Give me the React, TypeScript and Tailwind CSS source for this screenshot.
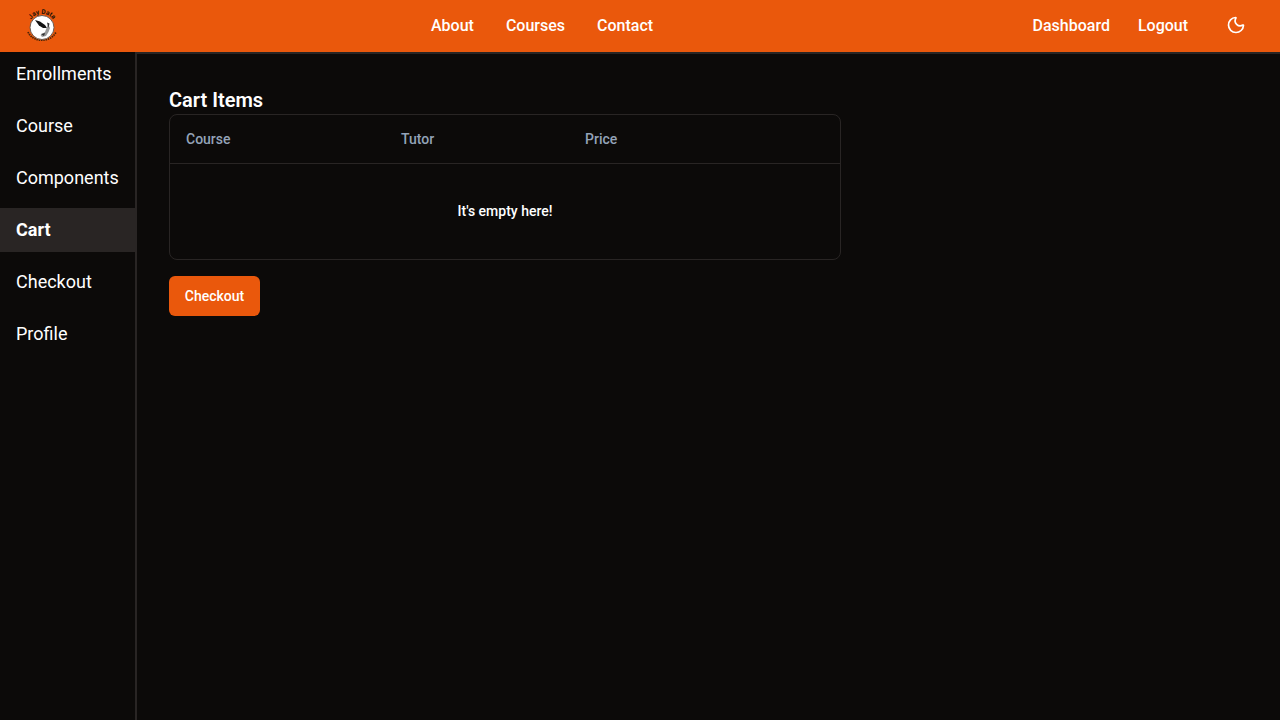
import { Moon } from 'lucide-react';

const sideLinks = ['Enrollments', 'Course', 'Components', 'Cart', 'Checkout', 'Profile'];

function Logo() {
  return (
    <svg width="34" height="34" viewBox="0 0 34 34" aria-hidden="true">
      <defs>
        <path id="logo-arc" d="M5.5 12 C9 2.5 25 2.5 28.5 12" />
      </defs>
      <text fontFamily="Roboto, sans-serif" fontSize="6.5" fontWeight="700" fill="#1c1208">
        <textPath href="#logo-arc" startOffset="50%" textAnchor="middle">
          Jay Data
        </textPath>
      </text>
      <path d="M3 23 C8 34 26 34 31 23" fill="none" stroke="#4a2408" strokeWidth="1.7" strokeDasharray="1.5 0.8" />
      <circle cx="17" cy="18.5" r="12" fill="#fff" stroke="#6b5a50" strokeWidth="1" />
      <path d="M10 11 L15 12.5 L20 16 L22 19 L18 19 L14 16.5 Z" fill="#111" />
      <path d="M23 15 L25 19 L23.5 23 L21 27 L17 28 L15.5 26 L20 23 Z" fill="#999" />
      <path d="M22 13.5 L24.5 14.5 L23.5 19 Z" fill="#333" />
      <path d="M16 25 L20 24 L19 27 Z" fill="#333" />
    </svg>
  );
}

export default function App() {
  return (
    <div className="flex h-screen flex-col overflow-hidden bg-[#0c0a09] font-['Roboto',sans-serif] text-white antialiased">
      <nav className="flex h-[52px] shrink-0 items-center bg-[#ea580c]">
        <div className="ml-[25px] flex w-[34px] items-center">
          <Logo />
        </div>
        <div className="ml-[372px] flex gap-8 text-base font-medium">
          <a>About</a>
          <a>Courses</a>
          <a>Contact</a>
        </div>
        <div className="ml-auto flex items-center text-base font-medium">
          <a>Dashboard</a>
          <a className="ml-7">Logout</a>
          <Moon className="-mt-0.5 ml-[38px] mr-[34px] h-5 w-5" strokeWidth={2} />
        </div>
      </nav>
      <div className="h-0.5 shrink-0 bg-[#292524]" />
      <div className="-mt-0.5 flex min-h-0 flex-1">
        <aside className="flex w-[137px] shrink-0 flex-col gap-2 border-r-2 border-[#292524] bg-[#0c0a09]">
          {sideLinks.map((link) => (
            <a
              key={link}
              className={`flex h-11 items-center px-4 text-lg ${link === 'Cart' ? 'bg-[#292524] font-bold' : ''}`}
            >
              {link}
            </a>
          ))}
        </aside>
        <main className="flex-1 px-8 pt-9">
          <h2 className="text-xl leading-6 font-semibold">Cart Items</h2>
          <div className="mt-0.5 w-[672px] overflow-hidden rounded-lg border border-[#292524]">
            <table className="w-full text-left text-sm">
              <thead>
                <tr className="h-12 border-b border-[#292524] font-medium text-[#94a3b8]">
                  <th className="w-[215px] pl-4 font-medium">Course</th>
                  <th className="w-[184px] pl-4 font-medium">Tutor</th>
                  <th className="pl-4 font-medium">Price</th>
                </tr>
              </thead>
              <tbody>
                <tr className="h-24">
                  <td colSpan={3} className="text-center font-medium">
                    It's empty here!
                  </td>
                </tr>
              </tbody>
            </table>
          </div>
          <button className="mt-4 h-10 w-[91px] rounded-md bg-[#ea580c] text-sm font-medium text-white">
            Checkout
          </button>
        </main>
      </div>
    </div>
  );
}
